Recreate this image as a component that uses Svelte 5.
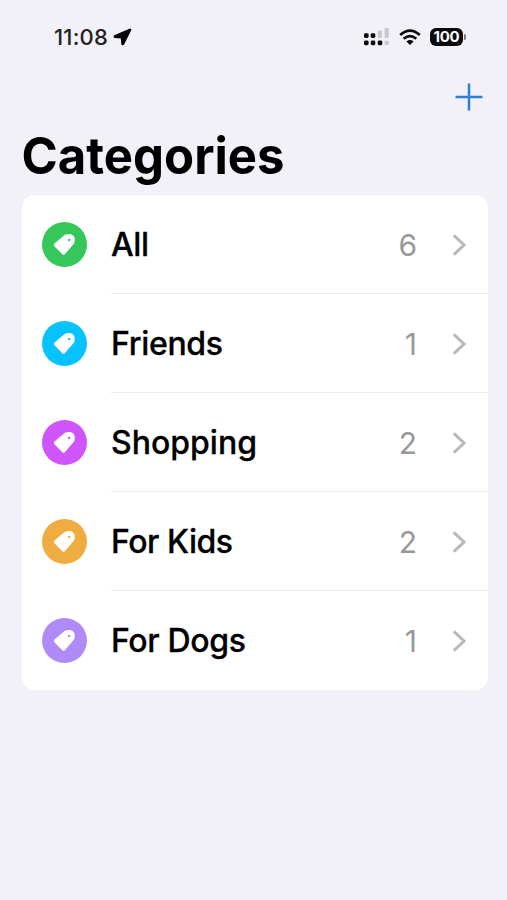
<script>
	let categories = [
		{ name: 'All', count: 6, color: '#35c759', width: 38 },
		{ name: 'Friends', count: 1, color: '#06c3ff', width: 112 },
		{ name: 'Shopping', count: 2, color: '#cf55fa', width: 146 },
		{ name: 'For Kids', count: 2, color: '#efac40', width: 122 },
		{ name: 'For Dogs', count: 1, color: '#b08bf8', width: 135 }
	];
</script>

<main>
	<header class="status">
		<span class="time">11:08</span>
		<svg class="location" width="19" height="18" viewBox="0 0 19 18">
			<path d="M17.2 1.2 L1.6 8 Q.8 8.8 1.9 9.4 L8.4 9.8 L9 16 Q9.7 17.1 10.6 16 L17.7 1.7 Z" fill="#050507" stroke="#050507" stroke-width="1.4" stroke-linejoin="round" />
		</svg>
		<div class="icons">
			<svg width="27" height="18" viewBox="0 0 27 18">
				<g fill="#0b0b0d">
					<rect x="1" y="5.3" width="4.6" height="4.6" rx="1.4" />
					<rect x="7.7" y="5.3" width="4.6" height="4.6" rx="1.4" />
					<rect x="1" y="12.6" width="4.6" height="4.6" rx="1.4" />
					<rect x="7.7" y="12.6" width="4.6" height="4.6" rx="1.4" />
					<rect x="14.7" y="12.6" width="4.6" height="4.6" rx="1.4" />
				</g>
				<g fill="#c9c8cf">
					<rect x="14.7" y="2.5" width="4.2" height="7.4" rx="1.2" />
					<rect x="21.6" y="0" width="4.2" height="9.9" rx="1.2" />
					<rect x="21.6" y="12.8" width="4.2" height="4.2" rx="1.2" />
				</g>
			</svg>
			<svg width="22" height="17" viewBox="0 0 22 17">
				<g fill="none" stroke="#0b0b0d" stroke-width="2.7">
					<path d="M1.2 6 Q11 -2.6 20.8 6" />
					<path d="M4.7 9.8 Q11 4.5 17.3 9.8" />
				</g>
				<path d="M7.4 12.4 Q11 9.6 14.6 12.4 L11 16 Z" fill="#0b0b0d" />
			</svg>
			<div class="battery"><span>100</span></div>
			<i class="tip"></i>
		</div>
	</header>

	<nav>
		<button aria-label="Add category">
			<svg width="28" height="28" viewBox="0 0 28 28">
				<path d="M14 .5V27.5M.5 14H27.5" stroke="#2d80d8" stroke-width="2.5" />
			</svg>
		</button>
	</nav>

	<h1>
		<svg width="290" height="66">
			<text x="-.5" y="48" textLength="263" lengthAdjust="spacingAndGlyphs">Categories</text>
		</svg>
	</h1>

	<ul>
		{#each categories as category}
			<li>
				<span class="badge" style="background: {category.color}">
					<svg width="23" height="23" viewBox="0 0 23 23">
						<path
							d="M1.5 10.4 L11.3 2.3 Q12.4 1.4 13.8 1.3 L17.4 1.1 Q21.3 2.4 21.8 5.8 L21.5 8.8 Q21.5 10 20.6 11 L11.8 21.2 Q10.5 22.4 9.3 21.2 L1.4 13.2 Q.2 11.7 1.5 10.4 Z M16.2 5.7 A1.2 1.2 0 1 0 16.2 8.1 A1.2 1.2 0 1 0 16.2 5.7 Z"
							fill="#fff"
							fill-rule="evenodd"
						/>
					</svg>
				</span>
				<div class="row">
					<svg class="name" width="190" height="48">
						<text x="0" y="35" textLength={category.width}>{category.name}</text>
					</svg>
					<span class="count">{category.count}</span>
					<svg class="chevron" width="14" height="22" viewBox="0 0 14 22">
						<path d="M1.8 1.3 L12 11 L1.8 20.7" fill="none" stroke="#b9b9bb" stroke-width="3" />
					</svg>
				</div>
			</li>
		{/each}
	</ul>
</main>

<style>
	:global(body) {
		background: #f2f1f7;
	}

	main {
		height: 900px;
		box-sizing: border-box;
		padding: 0 19px 0 22px;
		font-family: Inter, sans-serif;
		color: #050505;
		overflow: hidden;
	}

	.status {
		height: 75px;
		box-sizing: border-box;
		display: flex;
		align-items: center;
		padding: 0 22px 1px 32px;
	}

	.time {
		font-size: 22px;
		font-weight: 500;
		letter-spacing: 0.2px;
		color: #222225;
	}

	.location {
		margin-left: 5px;
	}

	.icons {
		display: flex;
		align-items: center;
		margin-left: auto;
	}

	.icons svg {
		margin-right: 9px;
	}

	.battery {
		width: 33px;
		height: 18px;
		border-radius: 6px;
		background: #0b0b0d;
		color: #fff;
		font-size: 15px;
		font-weight: 700;
		line-height: 18px;
		text-align: center;
		letter-spacing: -0.3px;
	}

	.tip {
		width: 2px;
		height: 6px;
		margin-left: 1px;
		border-radius: 0 2px 2px 0;
		background: #77777c;
	}

	nav {
		height: 51px;
		display: flex;
		justify-content: flex-end;
		align-items: flex-start;
	}

	button {
		display: flex;
		margin: 8px 5px 0 0;
		padding: 0;
		border: none;
		background: none;
	}

	h1 {
		height: 69px;
		margin: 0;
	}

	h1 text {
		font-size: 50.5px;
		font-weight: 700;
	}

	ul {
		width: 466px;
		margin: 0;
		padding: 0;
		border-radius: 13px;
		background: #fff;
		list-style: none;
	}

	li {
		height: 99px;
		display: flex;
		align-items: center;
		padding-left: 20px;
	}

	.badge {
		width: 45px;
		height: 45px;
		display: flex;
		align-items: center;
		justify-content: center;
		border-radius: 50%;
	}

	.row {
		flex: 1;
		height: 99px;
		box-sizing: border-box;
		display: flex;
		align-items: center;
		margin-left: 24px;
		padding: 1px 22px 0 0;
		border-bottom: 1px solid #e9e9eb;
	}

	li:last-child .row {
		border-color: transparent;
	}

	.name text {
		font-size: 32px;
		font-weight: 500;
		stroke: #050505;
		stroke-width: 0.3px;
	}

	.count {
		margin-left: auto;
		font-size: 30px;
		color: #98989b;
	}

	.chevron {
		margin-left: 35px;
	}
</style>
